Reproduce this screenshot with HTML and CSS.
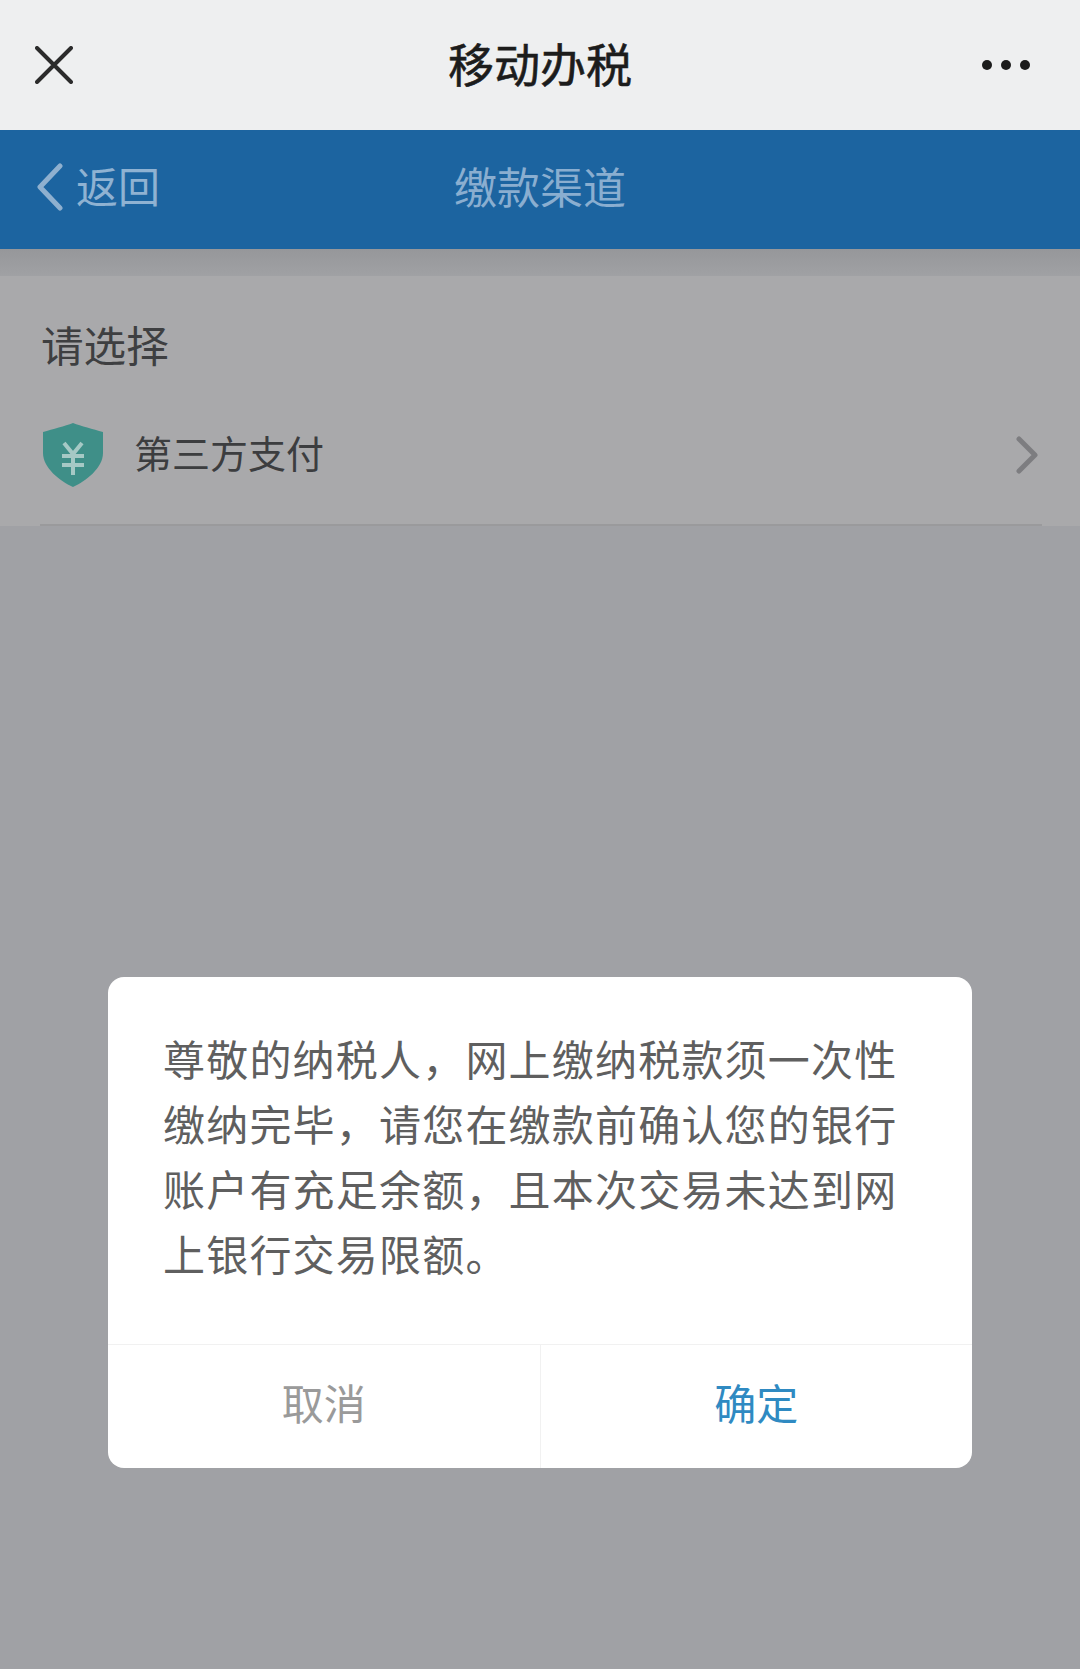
FILE: index.html
```html
<!DOCTYPE html>
<html lang="zh-CN">
<head>
<meta charset="utf-8">
<title>移动办税</title>
<link rel="stylesheet" href="styles.css">
</head>
<body>
<div class="page">
  <header class="topbar">
    <svg class="icon-close" width="38" height="38" viewBox="0 0 38 38"><path d="M2 2L36 36M36 2L2 36"/></svg>
    <h1 class="topbar-title">移动办税</h1>
    <div class="dots"><span class="dot"></span><span class="dot"></span><span class="dot"></span></div>
  </header>
  <nav class="navbar">
    <div class="back">
      <svg class="icon-back" width="28" height="48" viewBox="0 0 28 48"><path d="M24 3L4 24L24 45"/></svg>
      <span class="back-text">返回</span>
    </div>
    <div class="nav-title">缴款渠道</div>
  </nav>
  <div class="band"></div>
  <section class="choices">
    <h2 class="choices-title">请选择</h2>
    <div class="row">
      <svg class="icon-shield" width="60" height="64" viewBox="0 0 60 64">
        <path class="shield-body" d="M30 0C38 3 50 6 60 9V30C60 45 43 58 30 64C17 58 0 45 0 30V9C10 6 22 3 30 0Z"/>
        <path class="shield-mark" d="M21 20L30 31L39 20M19 33H41M19 42H41M30 31V52"/>
      </svg>
      <span class="row-label">第三方支付</span>
      <svg class="icon-chevron" width="22" height="38" viewBox="0 0 22 38"><path d="M3 3L19 19L3 35"/></svg>
    </div>
  </section>
  <div class="rest"></div>
  <div class="scrim">
    <div class="dialog">
      <p class="dialog-text">尊敬的纳税人，网上缴纳税款须一次性缴纳完毕，请您在缴款前确认您的银行账户有充足余额，且本次交易未达到网上银行交易限额。</p>
      <div class="dialog-actions">
        <div class="action action-cancel">取消</div>
        <div class="action action-ok">确定</div>
      </div>
    </div>
  </div>
</div>
</body>
</html>
```
FILE: styles.css
```css
* { box-sizing: border-box; }
html, body { margin: 0; padding: 0; }
body {
  font-family: "Noto Sans CJK SC", "Noto Sans", sans-serif;
  background: #a0a1a5;
}
.page {
  position: relative;
  width: 1080px;
  height: 1669px;
  display: flex;
  flex-direction: column;
  overflow: hidden;
}
.topbar {
  height: 130px;
  background: #eeeff0;
  display: grid;
  grid-template-columns: 1fr auto 1fr;
  align-items: center;
  padding: 0 50px 0 50px;
}
.icon-close { margin-left: -15px; }
.icon-close path { fill: none; stroke: #2b2b2b; stroke-width: 4; stroke-linecap: round; }
.topbar-title {
  margin: 0;
  padding: 0 0 6px 0;
  font-size: 46px;
  font-weight: 400;
  -webkit-text-stroke: 0.6px #1c1c1c;
  line-height: 60px;
  color: #1c1c1c;
}
.dots { display: flex; gap: 9px; justify-self: end; }
.dot { width: 10px; height: 10px; border-radius: 50%; background: #1c1c1c; }
.navbar {
  height: 119px;
  background: #1c64a0;
  display: grid;
  grid-template-columns: 1fr auto 1fr;
  align-items: center;
  padding: 0 36px 6px;
}
.back { display: flex; align-items: center; gap: 12px; }
.icon-back path { fill: none; stroke: #8fb0cf; stroke-width: 5; stroke-linecap: round; stroke-linejoin: round; }
.back-text { font-size: 42px; line-height: 56px; color: #8fb2d2; margin-bottom: 4px; }
.nav-title {
  font-size: 43px;
  line-height: 56px;
  color: #8aaed0;
  margin-bottom: 4px;
}
.band {
  height: 27px;
  background: linear-gradient(#96979a, #a0a1a4);
}
.choices {
  height: 250px;
  background: #a9a9ab;
  padding: 38px 38px 0 40px;
}
.choices-title {
  margin: 0 0 0 1px;
  font-size: 42.6px;
  font-weight: 400;
  line-height: 60px;
  color: #3e3f41;
}
.row {
  margin-top: 38px;
  height: 114px;
  padding: 0 4px 27px 3px;
  display: flex;
  align-items: center;
  border-bottom: 2px solid #9a9a9c;
}
.shield-body { fill: #3f8f88; }
.shield-mark { fill: none; stroke: #a6c9c5; stroke-width: 4; }
.row-label {
  margin-left: 31px;
  margin-bottom: 6px;
  flex: 1;
  font-size: 38px;
  line-height: 50px;
  color: #3c3d3f;
}
.icon-chevron path { fill: none; stroke: #7d7d80; stroke-width: 5; stroke-linecap: round; stroke-linejoin: round; }
.rest { flex: 1; background: #a0a1a5; }
.scrim {
  position: absolute;
  inset: 0;
  display: flex;
  justify-content: center;
  padding-top: 977px;
}
.dialog {
  width: 864px;
  height: 491px;
  background: #fff;
  border-radius: 16px;
  overflow: hidden;
  display: flex;
  flex-direction: column;
}
.dialog-text {
  margin: 0;
  padding: 48px 55px 59px;
  font-size: 42px;
  line-height: 65px;
  letter-spacing: 1.2px;
  color: #5f5f5f;
}
.dialog-actions {
  flex: 1;
  display: flex;
  border-top: 1px solid #f1f1f1;
}
.action {
  flex: 1;
  display: flex;
  align-items: center;
  justify-content: center;
  padding-bottom: 9px;
  font-size: 42px;
  line-height: 56px;
}
.action-cancel { color: #9a9a9a; border-right: 1px solid #f1f1f1; }
.action-ok { color: #2f8ac2; }
```
